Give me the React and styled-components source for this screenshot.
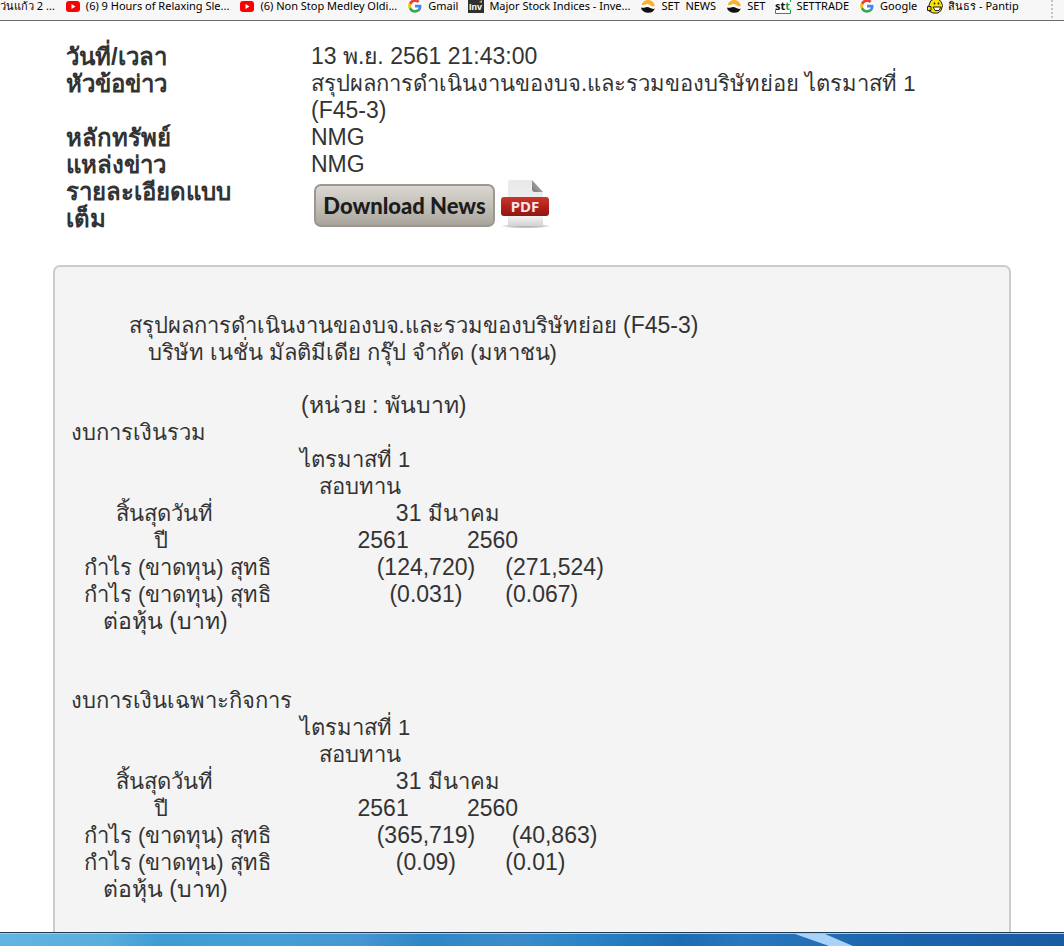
import styled, { createGlobalStyle } from 'styled-components';

const GlobalStyle = createGlobalStyle`
	* {
		box-sizing: border-box;
	}
	body {
		margin: 0;
		background: #ffffff;
		color: #333333;
		font-family: 'Liberation Sans', Arial, 'Tahoma', sans-serif;
		font-size: 23px;
		line-height: 27px;
	}
`;

const Screen = styled.div`
	display: flex;
	flex-direction: column;
	height: 100vh;
	overflow: hidden;
`;

const BookmarkBar = styled.nav`
	display: flex;
	flex: none;
	align-items: flex-end;
	justify-content: space-between;
	height: 21px;
	overflow: hidden;
	background: #f7f7f7;
	border-bottom: 1px solid #6d6d6d;
`;

const BookmarkList = styled.div`
	display: flex;
	gap: 10px;
	padding-bottom: 6px;
`;

const Bookmark = styled.a`
	display: flex;
	flex: none;
	align-items: center;
	gap: 5px;
	height: 16px;
	color: #000000;
	font-family: 'Noto Sans', 'Open Sans', sans-serif;
	font-size: 11px;
	line-height: 16px;
	white-space: pre;
	text-decoration: none;
`;

const BarGrip = styled.div`
	height: 18px;
	margin: 0 11px 2px 0;
	border-left: 2px dotted #c4c4c4;
`;

const Page = styled.main`
	flex: 1;
	min-height: 0;
	overflow: hidden;
	padding: 22px 53px 0;
`;

const InfoTable = styled.table`
	width: 100%;
	border-collapse: collapse;
`;

const InfoLabel = styled.th`
	width: 246px;
	padding: 0 60px 0 13px;
	text-align: left;
	vertical-align: top;
	font-size: 24px;
	font-weight: bold;
`;

const InfoValue = styled.td`
	padding: 0 80px 0 12px;
	vertical-align: top;
`;

const Thai = styled.span`
	font-size: 22px;
`;

const Actions = styled.div`
	display: flex;
	align-items: center;
	gap: 6px;
	padding: 2px 0 0 3px;
`;

const DownloadButton = styled.button`
	width: 181px;
	height: 43px;
	padding: 0;
	border: 2px solid #9a9891;
	border-radius: 7px;
	background: linear-gradient(#d9d7d0, #c3c0b8 50%, #a9a59d);
	color: #1c1c1c;
	font-family: 'Lato', sans-serif;
	font-size: 22px;
	font-weight: 900;
	white-space: nowrap;
`;

const PdfLink = styled.a`
	display: block;
	height: 50px;
`;

const NewsBody = styled.section`
	margin-top: 33px;
	padding: 45px 16px 60px;
	border: 2px solid #cccccc;
	border-radius: 7px;
	background: #f4f4f4;
`;

const Line = styled.p`
	margin: 0;
	white-space: pre;
`;

const Unit = styled(Line)`
	margin-top: 26px;
`;

const Statement = styled.table`
	width: 100%;
	margin-bottom: 52px;
	border-collapse: collapse;
	table-layout: fixed;
	white-space: pre;

	caption {
		text-align: left;
	}
	th,
	td {
		padding: 0;
		text-align: left;
		font-weight: normal;
	}
`;

const LabelCol = styled.col`
	width: 229px;
`;

const FirstCol = styled.col`
	width: 167px;
`;

const Taskbar = styled.footer`
	flex: none;
	height: 14px;
	border-top: 1px solid #1f3a52;
	background: linear-gradient(
		90deg,
		#62b5e0 0%,
		#5aaedc 10%,
		#3f9cd2 15%,
		#459fd6 25%,
		#4596d2 34%,
		#2f86c5 40%,
		#3c8cca 48%,
		#2a84c6 55%,
		#1c6cb3 64%,
		#2b78be 70%,
		#1d66ad 82%,
		#1a5aa3 100%
	);
	box-shadow: inset 0 1px 0 #a3cbe6;
	overflow: hidden;

	svg {
		display: block;
		width: 100%;
		height: 13px;
	}
`;

const YoutubeIcon = () => (
	<svg width='16' height='16' viewBox='0 0 16 16'>
		<rect x='1' y='3' width='14' height='11' rx='3' fill='#ff0000' />
		<path d='M6.5 6v5l4-2.5z' fill='#ffffff' />
	</svg>
);

const GoogleIcon = () => (
	<svg width='16' height='16' viewBox='0 0 48 48'>
		<circle cx='24' cy='24' r='24' fill='#ffffff' />
		<path fill='#ea4335' d='M24 12c3.500 0 6.200 1.400 8 3l6-6C34.500 5.500 29.600 4 24 4 15.700 4 8.700 8.700 5.600 15.500l7 5.400C14.300 15.700 18.700 12 24 12z' />
		<path fill='#4285f4' d='M43.600 24.500c0-1.600-.2-2.900-.5-4.200H24v8h11c-.5 2.600-2 4.800-4.200 6.300l6.700 5.200c4-3.700 6.100-9.100 6.100-15.300z' />
		<path fill='#fbbc05' d='M12.600 27.500c-.9-2.300-.9-4.500 0-6.900l-7-5.400c-2.900 5.800-2.900 12 0 17.800z' />
		<path fill='#34a853' d='M24 44c5.400 0 10-1.800 13.400-4.800l-6.700-5.200c-1.800 1.300-4.100 2-6.700 2-5.200 0-9.700-3.500-11.400-8.500l-7 5.400C8.900 39.600 15.900 44 24 44z' />
	</svg>
);

const InvIcon = () => (
	<svg width='16' height='16' viewBox='0 0 16 16'>
		<rect y='1' width='16' height='14' fill='#303030' />
		<text x='1' y='12' fill='#ffffff' fontFamily='Liberation Sans, sans-serif' fontSize='9' fontWeight='bold'>
			Inv
		</text>
		<path d='M11 4l3-2v3z' fill='#f7941d' />
	</svg>
);

const SetIcon = () => (
	<svg width='16' height='16' viewBox='0 0 16 16'>
		<circle cx='8' cy='8' r='7.500' fill='#ffffff' />
		<path d='M1.500 7a6.700 6 0 0 1 13.300 1c-3 2-4.300-2-7.300-2-2.500 0-3.500 2-6 1z' fill='#fbb034' />
		<path d='M1 9.500c3 1 4-.5 6-.5 3 0 5 3 7.800 1.500a7 5.500 0 0 1-13.800-1z' fill='#111111' />
	</svg>
);

const SttIcon = () => (
	<svg width='16' height='16' viewBox='0 0 16 16'>
		<rect width='16' height='16' fill='#ffffff' />
		<path d='M.5 12v3.500h15V12M15.500 4V1' fill='none' stroke='#16a34a' />
		<text x='0' y='12' fill='#111111' fontFamily='Noto Sans, sans-serif' fontSize='11' fontWeight='bold'>
			st<tspan fill='#16a34a'>t</tspan>
		</text>
	</svg>
);

const PantipIcon = () => (
	<svg width='16' height='16' viewBox='0 0 16 16'>
		<path d='M4 2.500L7 1h4l3 2.500 1.500 4-1.500 5-3 2.500H6l-4-2V7z' fill='#ffe600' stroke='#1a1a1a' />
		<path d='M.5 8.500h3.500v4H.5z' fill='#ffe600' stroke='#1a1a1a' />
		<path d='M6 9h8l-2 3.500H8z' fill='#ffffff' stroke='#1a1a1a' />
		<path d='M7.500 4.500v2M11.500 4.500v2' stroke='#1a1a1a' strokeWidth='1.500' />
	</svg>
);

const PdfIcon = () => (
	<svg width='50' height='50' viewBox='0 0 50 50'>
		<defs>
			<linearGradient id='sheet' x1='0' y1='0' x2='0' y2='1'>
				<stop offset='0' stopColor='#e9e9e9' />
				<stop offset='0.8' stopColor='#f1f1f1' />
				<stop offset='1' stopColor='#d2d2d2' />
			</linearGradient>
			<linearGradient id='fold' x1='0' y1='1' x2='1' y2='0'>
				<stop offset='0' stopColor='#777777' />
				<stop offset='1' stopColor='#c4c4c4' />
			</linearGradient>
			<linearGradient id='band' x1='0' y1='0' x2='0' y2='1'>
				<stop offset='0' stopColor='#c9382f' />
				<stop offset='0.5' stopColor='#b3211b' />
				<stop offset='1' stopColor='#8d1713' />
			</linearGradient>
			<radialGradient id='shade'>
				<stop offset='0' stopColor='#a8a8a8' />
				<stop offset='0.7' stopColor='#cccccc' />
				<stop offset='1' stopColor='#ffffff' />
			</radialGradient>
		</defs>
		<ellipse cx='25' cy='46' rx='25' ry='2.500' fill='url(#shade)' />
		<path d='M9 0h22l11 12v32q0 2-2 2H9q-2 0-2-2V2q0-2 2-2z' fill='url(#sheet)' />
		<path d='M31 0l11 12h-8q-3 0-3-3z' fill='url(#fold)' />
		<rect x='0' y='17' width='48' height='19' rx='3' fill='url(#band)' />
		<text x='24' y='32' textAnchor='middle' fill='#f6e6e5' fontFamily='Noto Sans, sans-serif' fontSize='15' fontWeight='bold'>
			PDF
		</text>
	</svg>
);

const bookmarks = [
	{ title: 'ว่นแก้ว 2 ...' },
	{ title: '(6) 9 Hours of Relaxing Sle...', icon: YoutubeIcon },
	{ title: '(6) Non Stop Medley Oldi...', icon: YoutubeIcon },
	{ title: 'Gmail', icon: GoogleIcon },
	{ title: 'Major Stock Indices - Inve...', icon: InvIcon },
	{ title: 'SET  NEWS', icon: SetIcon },
	{ title: 'SET', icon: SetIcon },
	{ title: 'SETTRADE', icon: SttIcon },
	{ title: 'Google', icon: GoogleIcon },
	{ title: 'สินธร - Pantip', icon: PantipIcon },
];

const info = [
	['วันที่/เวลา', '13 พ.ย. 2561 21:43:00'],
	[
		'หัวข้อข่าว',
		<>
			<Thai>สรุปผลการดำเนินงานของบจ.และรวมของบริษัทย่อย ไตรมาสที่ 1</Thai> (F45-3)
		</>,
	],
	['หลักทรัพย์', 'NMG'],
	['แหล่งข่าว', 'NMG'],
];

const statements = [
	{
		name: 'งบการเงินรวม',
		profit: ['            (124,720)', '      (271,524)'],
		perShare: ['              (0.031)', '      (0.067)'],
	},
	{
		name: 'งบการเงินเฉพาะกิจการ',
		profit: ['            (365,719)', '       (40,863)'],
		perShare: ['               (0.09)', '      (0.01)'],
	},
];

const StatementTable = ({ name, profit, perShare }) => (
	<Statement>
		<caption>
			<Thai>{name}</Thai>
		</caption>
		<colgroup>
			<LabelCol />
			<FirstCol />
			<col />
		</colgroup>
		<tbody>
			<tr>
				<td />
				<th colSpan={2}>
					<Thai>ไตรมาสที่ 1</Thai>
				</th>
			</tr>
			<tr>
				<td />
				<th colSpan={2}>
					{'   '}
					<Thai>สอบทาน</Thai>
				</th>
			</tr>
			<tr>
				<th>
					{'       '}
					<Thai>สิ้นสุดวันที่</Thai>
				</th>
				<td colSpan={2}>
					{'               31 '}
					<Thai>มีนาคม</Thai>
				</td>
			</tr>
			<tr>
				<th>
					{'             '}
					<Thai>ปี</Thai>
				</th>
				<td>{'         2561'}</td>
				<td>2560</td>
			</tr>
			<tr>
				<th>
					{'  '}
					<Thai>กำไร (ขาดทุน) สุทธิ</Thai>
				</th>
				<td>{profit[0]}</td>
				<td>{profit[1]}</td>
			</tr>
			<tr>
				<th>
					{'  '}
					<Thai>กำไร (ขาดทุน) สุทธิ</Thai>
				</th>
				<td>{perShare[0]}</td>
				<td>{perShare[1]}</td>
			</tr>
			<tr>
				<th colSpan={3}>{'     ต่อหุ้น (บาท)'}</th>
			</tr>
		</tbody>
	</Statement>
);

export default function App() {
	return (
		<Screen>
			<GlobalStyle />
			<BookmarkBar>
				<BookmarkList>
					{bookmarks.map(({ title, icon: Icon }) => (
						<Bookmark key={title} href='#'>
							{Icon && <Icon />}
							{title}
						</Bookmark>
					))}
				</BookmarkList>
				<BarGrip />
			</BookmarkBar>
			<Page>
				<InfoTable>
					<tbody>
						{info.map(([label, value]) => (
							<tr key={label}>
								<InfoLabel>{label}</InfoLabel>
								<InfoValue>{value}</InfoValue>
							</tr>
						))}
						<tr>
							<InfoLabel>รายละเอียดแบบเต็ม</InfoLabel>
							<InfoValue>
								<Actions>
									<DownloadButton type='button'>Download News</DownloadButton>
									<PdfLink href='#' aria-label='PDF'>
										<PdfIcon />
									</PdfLink>
								</Actions>
							</InfoValue>
						</tr>
					</tbody>
				</InfoTable>
				<NewsBody>
					<Line>
						{'         '}
						<Thai>สรุปผลการดำเนินงานของบจ.และรวมของบริษัทย่อย</Thai>
						{' (F45-3)'}
					</Line>
					<Line>
						{'            '}
						<Thai>บริษัท เนชั่น มัลติมีเดีย กรุ๊ป จำกัด (มหาชน)</Thai>
					</Line>
					<Unit>{'                                    (หน่วย : พันบาท)'}</Unit>
					{statements.map(statement => (
						<StatementTable key={statement.name} {...statement} />
					))}
					<Line>
						<Thai>ประเภทรายงานของผู้สอบบัญชีต่องบการเงิน</Thai>
					</Line>
				</NewsBody>
			</Page>
			<Taskbar>
				<svg viewBox='0 0 1064 13' preserveAspectRatio='none'>
					<path d='M795 1h30l28 12h-24z' fill='#a9d2f8' />
				</svg>
			</Taskbar>
		</Screen>
	);
}
